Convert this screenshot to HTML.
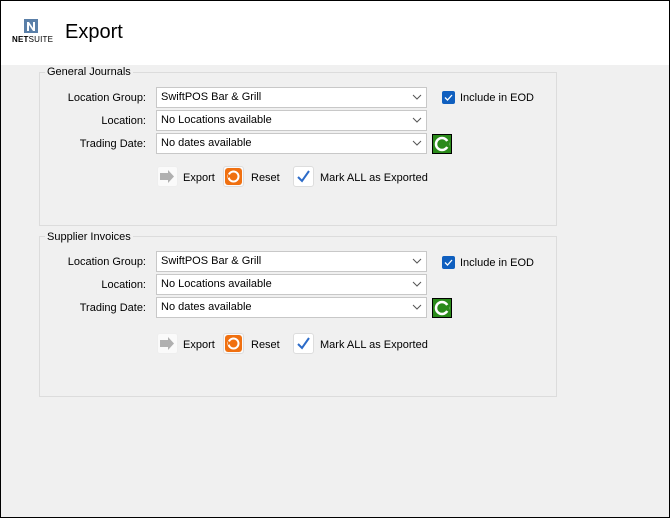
<!DOCTYPE html><html><head><style>
body{margin:0;width:670px;height:518px;overflow:hidden;font-family:"Liberation Sans",sans-serif;font-size:11px;color:#000}
#f{position:absolute;left:0;top:0;width:668px;height:516px;border:1px solid #000;background:#f0f0f0;overflow:hidden}
#hd{position:absolute;left:0;top:0;width:668px;height:64px;background:#fff}
.a{position:absolute}
.gb{position:absolute;border:1px solid #dcdcdc;left:38px;width:516px}
.gt{position:absolute;background:#f0f0f0;padding:0 2px;font-size:11px}
.lbl{position:absolute;width:145px;left:0;text-align:right;font-size:11px}
.cb{position:absolute;left:155px;width:269px;height:19px;background:#fff;border:1px solid #c8c8c8;font-size:11px;line-height:19px;box-sizing:content-box}
.cb span{position:absolute;left:4px}
.cb svg{position:absolute;right:4px;top:6px}
.ck{position:absolute;left:441px;width:13px;height:13px;background:#0f5fbf;border-radius:2px}
.t{position:absolute;font-size:11px}
.btn{position:absolute;width:19px;height:19px;border:1px solid #ddd;border-radius:3px;background:#fafafa}
</style></head><body><div id="f">
<div id="hd">
<svg class="a" style="left:23px;top:18px" width="14" height="14"><rect width="14" height="14" fill="#5a7fa8"/><path d="M3 12V3h2l4 6V3h2v9H9L5 6v6z" fill="#fff"/></svg>
<div class="a" style="left:11px;top:34px;font-size:8px;font-weight:bold;letter-spacing:0.2px">NET<span style="font-weight:normal">SUITE</span></div>
<div class="a" style="left:64px;top:20px;font-size:20px">Export</div>
</div>
<div class="gb" style="top:71px;height:152px"></div>
<div class="gt" style="left:44px;top:65px">General Journals</div>
<div class="gb" style="top:235px;height:159px"></div>
<div class="gt" style="left:44px;top:230px">Supplier Invoices</div>

<div class="lbl" style="top:91px">Location Group:</div>
<div class="cb" style="top:86px"><span>SwiftPOS Bar &amp; Grill</span><svg width="10" height="6"><path d="M1 1l4 4 4-4" stroke="#555" fill="none"/></svg></div>
<div class="ck" style="top:90px"><svg width="13" height="13"><path d="M3 6.5l2.5 2.5 4.5-5" stroke="#fff" fill="none" stroke-width="1.3"/></svg></div>
<div class="t" style="left:459px;top:91px">Include in EOD</div>
<div class="lbl" style="top:114px">Location:</div>
<div class="cb" style="top:109px"><span>No Locations available</span><svg width="10" height="6"><path d="M1 1l4 4 4-4" stroke="#555" fill="none"/></svg></div>
<div class="lbl" style="top:137px">Trading Date:</div>
<div class="cb" style="top:132px"><span>No dates available</span><svg width="10" height="6"><path d="M1 1l4 4 4-4" stroke="#555" fill="none"/></svg></div>
<svg class="a" style="left:431px;top:133px" width="20" height="20"><rect x=".5" y=".5" width="19" height="19" fill="#2a8a1a" stroke="#000"/><circle cx="10" cy="10" r="6" fill="none" stroke="#fff" stroke-width="2.5"/><path d="M10 10L17 6V14Z" fill="#2a8a1a"/><circle cx="10" cy="10" r="2" fill="#2a8a1a"/></svg>
<div class="btn" style="left:156px;top:165px;border-color:#eee"><svg width="19" height="19"><path d="M2 6h8V3l6 6.5-6 6.5v-3H2z" fill="#b0b0b0"/></svg></div>
<div class="t" style="left:182px;top:171px">Export</div>
<div class="btn" style="left:222px;top:165px"><svg width="19" height="19"><rect x="1" y="1" width="17" height="17" rx="3" fill="#f07010"/><circle cx="9.5" cy="9.5" r="5" fill="none" stroke="#fff" stroke-width="2"/><path d="M4 7l4 2-4 2z" fill="#f07010"/></svg></div>
<div class="t" style="left:250px;top:171px">Reset</div>
<div class="btn" style="left:292px;top:165px;background:#fff"><svg width="19" height="19"><path d="M4 10l4 4 7-10" stroke="#2c6bc8" stroke-width="2" fill="none"/></svg></div>
<div class="t" style="left:319px;top:171px">Mark ALL as Exported</div>

<div class="lbl" style="top:255px">Location Group:</div>
<div class="cb" style="top:250px"><span>SwiftPOS Bar &amp; Grill</span><svg width="10" height="6"><path d="M1 1l4 4 4-4" stroke="#555" fill="none"/></svg></div>
<div class="ck" style="top:255px"><svg width="13" height="13"><path d="M3 6.5l2.5 2.5 4.5-5" stroke="#fff" fill="none" stroke-width="1.3"/></svg></div>
<div class="t" style="left:459px;top:256px">Include in EOD</div>
<div class="lbl" style="top:278px">Location:</div>
<div class="cb" style="top:273px"><span>No Locations available</span><svg width="10" height="6"><path d="M1 1l4 4 4-4" stroke="#555" fill="none"/></svg></div>
<div class="lbl" style="top:301px">Trading Date:</div>
<div class="cb" style="top:296px"><span>No dates available</span><svg width="10" height="6"><path d="M1 1l4 4 4-4" stroke="#555" fill="none"/></svg></div>
<svg class="a" style="left:431px;top:297px" width="20" height="20"><rect x=".5" y=".5" width="19" height="19" fill="#2a8a1a" stroke="#000"/><circle cx="10" cy="10" r="6" fill="none" stroke="#fff" stroke-width="2.5"/><path d="M10 10L17 6V14Z" fill="#2a8a1a"/><circle cx="10" cy="10" r="2" fill="#2a8a1a"/></svg>
<div class="btn" style="left:156px;top:332px;border-color:#eee"><svg width="19" height="19"><path d="M2 6h8V3l6 6.5-6 6.5v-3H2z" fill="#b0b0b0"/></svg></div>
<div class="t" style="left:182px;top:338px">Export</div>
<div class="btn" style="left:222px;top:332px"><svg width="19" height="19"><rect x="1" y="1" width="17" height="17" rx="3" fill="#f07010"/><circle cx="9.5" cy="9.5" r="5" fill="none" stroke="#fff" stroke-width="2"/><path d="M4 7l4 2-4 2z" fill="#f07010"/></svg></div>
<div class="t" style="left:250px;top:338px">Reset</div>
<div class="btn" style="left:292px;top:332px;background:#fff"><svg width="19" height="19"><path d="M4 10l4 4 7-10" stroke="#2c6bc8" stroke-width="2" fill="none"/></svg></div>
<div class="t" style="left:319px;top:338px">Mark ALL as Exported</div>
</div></body></html>
